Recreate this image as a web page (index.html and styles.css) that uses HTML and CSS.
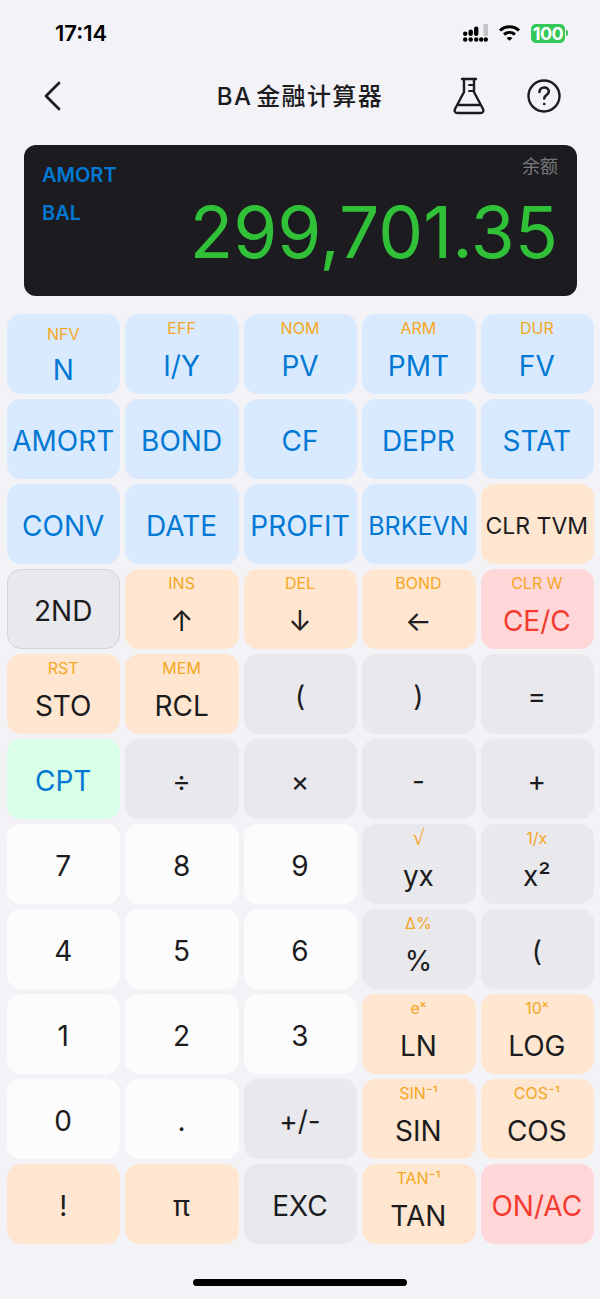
FILE: index.html
```html
<!DOCTYPE html>
<html lang="zh-CN">
<head>
    <meta charset="UTF-8">
    <meta name="viewport" content="width=device-width, initial-scale=1.0">
    <title>BA 金融计算器</title>
    <link rel="stylesheet" href="styles.css">
</head>
<body>
    <div class="status-bar">
        <span class="time">17:14</span>
        <div class="status-icons">
            <svg class="signal" width="25" height="18" viewBox="0 0 25 18" fill="#000">
                <circle cx="2.200" cy="15.500" r="2.200"/><circle cx="7.700" cy="15.500" r="2.200"/><circle cx="13.200" cy="15.500" r="2.200"/><circle cx="18.200" cy="15.500" r="2.200"/><circle cx="22.800" cy="15.500" r="2.200"/>
                <circle cx="2.200" cy="9.800" r="2.200"/><rect x="5.500" y="5.500" width="4.400" height="6.500" rx="2.200"/><rect x="11" y="2.500" width="4.400" height="9.500" rx="2.200"/>
                <rect x="20.500" y="0" width="4.500" height="12" rx="1" fill="#c4c4c6"/>
            </svg>
            <svg class="wifi" width="23" height="18" viewBox="0 0 22 18" fill="none" stroke="#000" stroke-width="3">
                <path d="M1.500 6.500c5.500-5 13.500-5 19 0"/>
                <path d="M5.500 10.500c3.200-2.800 7.800-2.800 11 0"/>
                <path d="M8 14l3 2.800 3-2.800c-1.800-1.400-4.200-1.400-6 0z" fill="#000" stroke="none"/>
            </svg>
            <div class="battery">100</div>
            <div class="battery-tip"></div>
        </div>
    </div>

    <div class="nav-bar">
        <svg class="nav-back" width="20" height="30" viewBox="0 0 20 30" fill="none" stroke="#1c1c1e" stroke-width="2.800" stroke-linecap="round" stroke-linejoin="round">
            <path d="M16 2L3 15l13 13"/>
        </svg>
        <h1 class="nav-title">BA 金融计算器</h1>
        <div class="nav-actions">
            <svg width="34" height="38" viewBox="0 0 34 38" fill="none" stroke="#1c1c1e" stroke-width="2.400" stroke-linecap="round" stroke-linejoin="round">
                <path d="M10 2h14"/>
                <path d="M12 2v13L3 32c-1 2 0 4 2.500 4h23c2.500 0 3.500-2 2.500-4l-9-17V2"/>
                <path d="M7 28h20"/>
                <path d="M17 8h5M17 14h5" stroke-width="1.800"/>
            </svg>
            <svg width="34" height="34" viewBox="0 0 34 34" fill="none" stroke="#1c1c1e" stroke-width="2.400" stroke-linecap="round" stroke-linejoin="round">
                <circle cx="17" cy="17" r="15.500"/>
                <path d="M12.500 13c0-2.800 2-4.500 4.700-4.500s4.600 1.700 4.600 4c0 3.600-4.600 3.500-4.600 7" stroke-width="2.600"/>
                <circle cx="17.200" cy="25" r="1.300" fill="#1c1c1e" stroke="none"/>
            </svg>
        </div>
    </div>

    <div class="display">
        <div class="display-left">
            <span>AMORT</span>
            <span>BAL</span>
        </div>
        <div class="display-right">
            <span class="display-hint">余额</span>
            <span class="display-value">299,701.35</span>
        </div>
    </div>

    <div class="keypad">
        <button class="key blue low"><small>NFV</small><span>N</span></button>
        <button class="key blue"><small>EFF</small><span>I/Y</span></button>
        <button class="key blue"><small>NOM</small><span>PV</span></button>
        <button class="key blue"><small>ARM</small><span>PMT</span></button>
        <button class="key blue"><small>DUR</small><span>FV</span></button>

        <button class="key blue"><span>AMORT</span></button>
        <button class="key blue"><span>BOND</span></button>
        <button class="key blue"><span>CF</span></button>
        <button class="key blue"><span>DEPR</span></button>
        <button class="key blue"><span>STAT</span></button>

        <button class="key blue"><span>CONV</span></button>
        <button class="key blue"><span>DATE</span></button>
        <button class="key blue"><span>PROFIT</span></button>
        <button class="key blue"><span class="fit-long">BRKEVN</span></button>
        <button class="key orange"><span class="fit-clr">CLR TVM</span></button>

        <button class="key gray outlined"><span>2ND</span></button>
        <button class="key orange"><small>INS</small><span>↑</span></button>
        <button class="key orange"><small>DEL</small><span>↓</span></button>
        <button class="key orange"><small>BOND</small><span>←</span></button>
        <button class="key red"><small>CLR W</small><span>CE/C</span></button>

        <button class="key orange"><small>RST</small><span>STO</span></button>
        <button class="key orange"><small>MEM</small><span>RCL</span></button>
        <button class="key gray"><span>(</span></button>
        <button class="key gray"><span>)</span></button>
        <button class="key gray"><span>=</span></button>

        <button class="key green"><span>CPT</span></button>
        <button class="key gray"><span>÷</span></button>
        <button class="key gray"><span>×</span></button>
        <button class="key gray"><span>-</span></button>
        <button class="key gray"><span>+</span></button>

        <button class="key white"><span>7</span></button>
        <button class="key white"><span>8</span></button>
        <button class="key white"><span>9</span></button>
        <button class="key gray"><small class="root">√</small><span>yx</span></button>
        <button class="key gray"><small>1/x</small><span>x²</span></button>

        <button class="key white"><span>4</span></button>
        <button class="key white"><span>5</span></button>
        <button class="key white"><span>6</span></button>
        <button class="key gray"><small>Δ%</small><span>%</span></button>
        <button class="key gray"><span>(</span></button>

        <button class="key white"><span>1</span></button>
        <button class="key white"><span>2</span></button>
        <button class="key white"><span>3</span></button>
        <button class="key orange"><small>eˣ</small><span>LN</span></button>
        <button class="key orange"><small>10ˣ</small><span>LOG</span></button>

        <button class="key white"><span>0</span></button>
        <button class="key white"><span>.</span></button>
        <button class="key gray"><span>+/-</span></button>
        <button class="key orange"><small>SIN⁻¹</small><span>SIN</span></button>
        <button class="key orange"><small>COS⁻¹</small><span>COS</span></button>

        <button class="key orange"><span>!</span></button>
        <button class="key orange"><span>π</span></button>
        <button class="key gray"><span>EXC</span></button>
        <button class="key orange"><small>TAN⁻¹</small><span>TAN</span></button>
        <button class="key red"><span>ON/AC</span></button>
    </div>

    <div class="home-bar"></div>
</body>
</html>
```

FILE: styles.css
```css
* {
    box-sizing: border-box;
}
body {
    width: 600px;
    height: 1299px;
    margin: 0;
    overflow: hidden;
    background-color: #f2f2f7;
    color: #1c1c1e;
    font-family: 'Inter', 'Noto Sans CJK SC', sans-serif;
}
.status-bar {
    height: 66px;
    padding: 19px 32px 0 55px;
    display: flex;
    justify-content: space-between;
    align-items: flex-start;
}
.time {
    font-size: 22px;
    line-height: 28px;
    font-weight: 600;
    color: #000;
}
.status-icons {
    display: flex;
    align-items: center;
    height: 28px;
    gap: 10px;
}
.battery {
    width: 34px;
    height: 19px;
    border-radius: 5px;
    background: #34c759;
    color: #fff;
    font-size: 18px;
    line-height: 19px;
    font-weight: 700;
    text-align: center;
    letter-spacing: -0.5px;
}
.battery-tip {
    width: 2px;
    height: 6px;
    margin-left: -9px;
    border-radius: 0 2px 2px 0;
    background: #34c759;
}
.nav-bar {
    height: 60px;
    padding: 0 39px 0 43px;
    display: flex;
    align-items: center;
    position: relative;
}
.nav-title {
    position: absolute;
    left: 0;
    right: 0;
    top: 15px;
    margin: 0;
    text-align: center;
    font-size: 24px;
    line-height: 32px;
    font-weight: 500;
    letter-spacing: 1.4px;
    word-spacing: -4px;
}
.nav-actions {
    margin-left: auto;
    display: flex;
    align-items: center;
    gap: 41px;
}
.display {
    width: 553px;
    height: 151px;
    margin: 19px 0 18px 24px;
    padding: 18px 19px 0 18px;
    display: flex;
    justify-content: space-between;
    background: #1c1c20;
    border-radius: 12px;
}
.display-left {
    display: flex;
    flex-direction: column;
    gap: 14px;
    color: #0078d4;
    font-size: 20px;
    line-height: 24px;
    font-weight: 600;
}
.display-right {
    display: flex;
    flex-direction: column;
    align-items: flex-end;
    margin-top: -1px;
}
.display-hint {
    color: #77777c;
    font-size: 18px;
    line-height: 10px;
}
.display-value {
    margin-top: 22px;
    color: #30c138;
    font-size: 71.2px;
    line-height: 76px;
    font-weight: 400;
}
.keypad {
    padding: 0 6px 0 7px;
    display: grid;
    grid-template-columns: repeat(5, 1fr);
    grid-auto-rows: 80px;
    gap: 5px;
}
.key {
    padding: 3px 1px 0 0;
    border: none;
    border-radius: 14px;
    display: flex;
    flex-direction: column;
    align-items: center;
    justify-content: center;
    font-family: inherit;
    color: #1c1c1e;
}
.key span {
    font-size: 28px;
    line-height: 34px;
    white-space: nowrap;
}
.key small {
    font-size: 16px;
    line-height: 18px;
    color: #f5a623;
    margin-bottom: 12px;
}
.key:has(small) {
    justify-content: flex-start;
    padding-top: 5px;
}
.key.low {
    padding-top: 11px;
}
.key.low small {
    margin-bottom: 10px;
}
.key .root {
    font-family: 'Liberation Serif', serif;
    font-size: 22px;
}
.key .fit-long {
    font-size: 25px;
}
.key .fit-clr {
    font-size: 23px;
}
.blue {
    background: #d9eaff;
    color: #0078d4;
}
.orange {
    background: #ffe6d0;
}
.gray {
    background: #e8e8ed;
}
.outlined {
    border: 1px solid #d4d4d8;
}
.white {
    background: #fcfcfd;
}
.red {
    background: #ffd7d8;
    color: #f33b30;
}
.green {
    background: #d9ffe8;
    color: #0078d4;
}
.home-bar {
    width: 214px;
    height: 7px;
    margin: 35px auto 0;
    border-radius: 4px;
    background: #000;
}
```
